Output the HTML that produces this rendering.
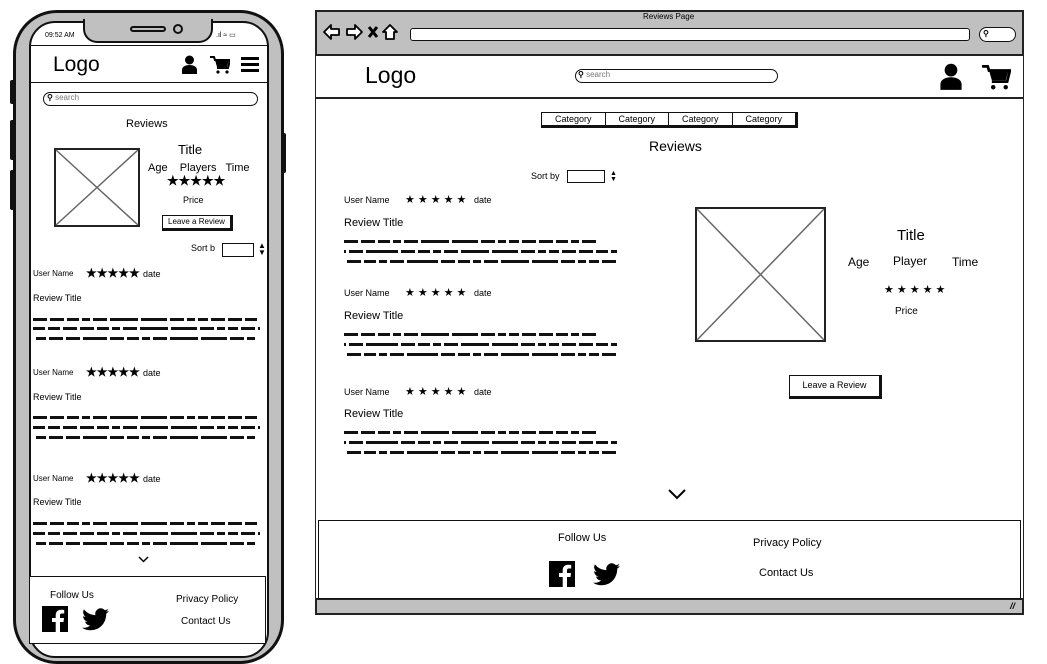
<!DOCTYPE html>
<html><head><meta charset="utf-8"><style>
*{box-sizing:border-box;margin:0;padding:0}
body{width:1047px;height:663px;background:#fff;position:relative;overflow:hidden;font-family:"Liberation Sans",sans-serif;color:#000}
.a{position:absolute;white-space:nowrap}
.scr{position:absolute;height:3px;background:repeating-linear-gradient(90deg,#111 0 14px,transparent 14px 17px,#111 17px 31px,transparent 31px 34px,#111 34px 46px,transparent 46px 49px,#111 49px 57px,transparent 57px 60px,#111 60px 74px,transparent 74px 77px,#111 77px 105px,transparent 105px 108px,#111 108px 134px,transparent 134px 137px,#111 137px 151px,transparent 151px 154px,#111 154px 162px,transparent 162px 165px,#111 165px 175px,transparent 175px 178px)}
.st{letter-spacing:1px}
</style></head><body>

<!-- PHONE -->
<div class="a" style="left:13px;top:10px;width:271px;height:654px;border:3px solid #111;border-radius:44px;background:#c0c0c0"></div>
<div class="a" style="left:29px;top:21px;width:240px;height:637px;border:2px solid #111;border-radius:26px;background:#fff"></div>
<div class="a" style="left:83px;top:19px;width:130px;height:24px;background:#c0c0c0;border:2px solid #111;border-top:none;border-radius:0 0 14px 14px"></div>
<div class="a" style="left:130px;top:26px;width:36px;height:6px;border:2px solid #111;border-radius:4px"></div>
<div class="a" style="left:173px;top:24px;width:10px;height:10px;border:2px solid #111;border-radius:50%"></div>
<div class="a" style="left:45px;top:32px;font-size:7px">09:52 AM</div>
<div class="a" style="left:216px;top:31px;font-size:7px">.ıl ≈ ▭</div>
<div class="a" style="left:10px;top:80px;width:5px;height:24px;background:#111;border-radius:2px"></div>
<div class="a" style="left:10px;top:120px;width:5px;height:40px;background:#111;border-radius:2px"></div>
<div class="a" style="left:10px;top:170px;width:5px;height:40px;background:#111;border-radius:2px"></div>
<div class="a" style="left:281px;top:133px;width:5px;height:40px;background:#111;border-radius:2px"></div>
<div class="a" style="left:30px;top:45px;width:237px;height:1px;background:#111"></div>
<div class="a" style="left:30px;top:82px;width:237px;height:1px;background:#111"></div>
<div class="a" style="left:53px;top:53px;font-size:21px">Logo</div>
<svg class="a" style="left:181px;top:55px" width="17" height="19" viewBox="0 0 17 19"><circle cx="8.5" cy="5" r="4.5"/><path d="M1 19v-4c0-3 3-5 7.5-5s7.5 2 7.5 5v4z"/></svg>
<svg class="a" style="left:210px;top:56px" width="20" height="18" viewBox="0 0 20 18"><path d="M0 1h4l1 3h15l-2 8H7" fill="none" stroke="#000" stroke-width="2"/><path d="M5 4h14l-2 7H7z"/><circle cx="8" cy="16" r="1.6"/><circle cx="17" cy="16" r="1.6"/></svg>
<div class="a" style="left:241px;top:57px;width:18px;height:3px;background:#000"></div>
<div class="a" style="left:241px;top:63px;width:18px;height:3px;background:#000"></div>
<div class="a" style="left:241px;top:69px;width:18px;height:3px;background:#000"></div>
<div class="a" style="left:43px;top:92px;width:215px;height:14px;border:1.5px solid #111;border-radius:8px"></div>
<div class="a" style="left:47px;top:93px;font-size:8px;color:#777"><b style="color:#000">⚲</b> search</div>
<div class="a" style="left:126px;top:118px;font-size:11px">Reviews</div>
<svg class="a" style="left:54px;top:148px" width="86" height="80"><rect x="1" y="1" width="84" height="77" fill="#fff" stroke="#222" stroke-width="2"/><path d="M2 2L84 77M84 2L2 77" stroke="#666" stroke-width="1.5"/></svg>
<div class="a" style="left:178px;top:142px;font-size:13px">Title</div>
<div class="a" style="left:148px;top:162px;font-size:11px">Age&nbsp;&nbsp;&nbsp; Players&nbsp;&nbsp; Time</div>
<div class="a" style="left:167px;top:173px;font-size:13px;font-weight:bold">★★★★★</div>
<div class="a" style="left:183px;top:195px;font-size:9px">Price</div>
<div class="a" style="left:162px;top:215px;width:71px;height:16px;border:1.5px solid #111;border-right-width:3px;border-bottom-width:3px;font-size:8px;text-align:center;line-height:12px">Leave a Review</div>
<div class="a" style="left:191px;top:243px;font-size:9px">Sort b</div>
<div class="a" style="left:222px;top:243px;width:32px;height:14px;border:1.5px solid #111"></div>
<div class="a" style="left:258px;top:242px;font-size:8px;line-height:7px">▲<br>▼</div>

<div class="a" style="left:33px;top:269px;font-size:8px">User Name</div><div class="a" style="left:86px;top:266px;font-size:12px;font-weight:bold">★★★★★</div><div class="a" style="left:143px;top:269px;font-size:9px">date</div>
<div class="a" style="left:33px;top:293px;font-size:9px">Review Title</div>
<div class="scr" style="left:33px;top:318px;width:227px"></div><div class="scr" style="left:33px;top:327px;width:227px;background-position:30px 0"></div><div class="scr" style="left:33px;top:337px;width:222px;background-position:60px 0"></div>

<div class="a" style="left:33px;top:368px;font-size:8px">User Name</div><div class="a" style="left:86px;top:365px;font-size:12px;font-weight:bold">★★★★★</div><div class="a" style="left:143px;top:368px;font-size:9px">date</div>
<div class="a" style="left:33px;top:392px;font-size:9px">Review Title</div>
<div class="scr" style="left:33px;top:416px;width:227px"></div><div class="scr" style="left:33px;top:426px;width:227px;background-position:30px 0"></div><div class="scr" style="left:33px;top:436px;width:222px;background-position:60px 0"></div>

<div class="a" style="left:33px;top:474px;font-size:8px">User Name</div><div class="a" style="left:86px;top:471px;font-size:12px;font-weight:bold">★★★★★</div><div class="a" style="left:143px;top:474px;font-size:9px">date</div>
<div class="a" style="left:33px;top:497px;font-size:9px">Review Title</div>
<div class="scr" style="left:33px;top:522px;width:227px"></div><div class="scr" style="left:33px;top:532px;width:227px;background-position:30px 0"></div><div class="scr" style="left:33px;top:542px;width:222px;background-position:60px 0"></div>
<svg class="a" style="left:138px;top:556px" width="11" height="7"><path d="M1 1l4.5 4.5L10 1" fill="none" stroke="#000" stroke-width="1.5"/></svg>

<div class="a" style="left:29px;top:576px;width:237px;height:68px;border:1.5px solid #111;background:#fff"></div>
<div class="a" style="left:50px;top:590px;font-size:10px">Follow Us</div>
<div class="a" style="left:176px;top:594px;font-size:10px">Privacy Policy</div>
<div class="a" style="left:181px;top:616px;font-size:10px">Contact Us</div>
<svg class="a" style="left:42px;top:606px" width="26" height="26" viewBox="0 0 26 26"><rect width="26" height="26"/><path d="M18 26V16h3.5l.5-4h-4V9.5c0-1.2.4-2 2-2h2.2V4c-.4 0-1.7-.2-3.2-.2-3.2 0-5.3 2-5.3 5.5V12H10v4h3.7v10z" fill="#fff"/></svg>
<svg class="a" style="left:82px;top:608px" width="27" height="23" viewBox="0 0 24 20"><path d="M24 2.4c-.9.4-1.8.6-2.8.8 1-.6 1.8-1.6 2.2-2.7-1 .6-2 1-3.1 1.2A4.9 4.9 0 0 0 11.9 6.2 14 14 0 0 1 1.7 1 4.9 4.9 0 0 0 3.2 7.6c-.8 0-1.6-.3-2.2-.6 0 2.4 1.7 4.4 3.9 4.8-.7.2-1.5.2-2.2.1.6 2 2.4 3.4 4.6 3.4A9.9 9.9 0 0 1 0 17.3 14 14 0 0 0 7.5 19.5c9.1 0 14-7.5 14-14v-.6c1-.7 1.8-1.6 2.5-2.5z"/></svg>

<!-- BROWSER -->
<div class="a" style="left:315px;top:10px;width:709px;height:605px;border:2px solid #222;background:#c0c0c0"></div>
<div class="a" style="left:316px;top:54px;width:707px;height:546px;background:#fff;border-top:2px solid #222;border-bottom:2px solid #222"></div>
<div class="a" style="left:643px;top:12px;font-size:8px">Reviews Page</div>
<svg class="a" style="left:323px;top:23px" width="82" height="18" viewBox="0 0 82 18">
<path d="M1 9L8 2v4h8v6H8v4z" fill="#fff" stroke="#000" stroke-width="1.8" stroke-linejoin="round"/>
<path d="M39 9L32 2v4h-8v6h8v4z" fill="#fff" stroke="#000" stroke-width="1.8" stroke-linejoin="round"/>
<path d="M46 4l8 10M54 4l-8 10" stroke="#000" stroke-width="3"/>
<path d="M60 9l7-7 7 7h-3v7h-8V9z" fill="#fff" stroke="#000" stroke-width="1.8" stroke-linejoin="round"/>
</svg>
<div class="a" style="left:410px;top:28px;width:560px;height:13px;border:1.5px solid #111;border-radius:3px;background:#fff"></div>
<div class="a" style="left:979px;top:27px;width:37px;height:15px;border:1.5px solid #111;border-radius:8px;background:#fff;font-size:8px;padding-left:3px;line-height:11px"><b>⚲</b></div>
<div class="a" style="left:316px;top:97px;width:707px;height:1.5px;background:#222"></div>
<div class="a" style="left:365px;top:62px;font-size:23px">Logo</div>
<div class="a" style="left:575px;top:69px;width:203px;height:14px;border:1.5px solid #111;border-radius:8px"></div>
<div class="a" style="left:578px;top:70px;font-size:8px;color:#777"><b style="color:#000">⚲</b> search</div>
<svg class="a" style="left:939px;top:63px" width="24" height="27" viewBox="0 0 17 19"><circle cx="8.5" cy="5" r="4.5"/><path d="M1 19v-4c0-3 3-5 7.5-5s7.5 2 7.5 5v4z"/></svg>
<svg class="a" style="left:981px;top:65px" width="30" height="25" viewBox="0 0 20 18"><path d="M0 1h4l1 3h15l-2 8H7" fill="none" stroke="#000" stroke-width="2"/><path d="M5 4h14l-2 7H7z"/><circle cx="8" cy="16" r="1.6"/><circle cx="17" cy="16" r="1.6"/></svg>

<div class="a" style="left:541px;top:112px;width:257px;height:16px;border:1.5px solid #111;border-right-width:3px;border-bottom-width:3px;display:flex;font-size:9px">
<div style="flex:1;text-align:center;border-right:1.5px solid #111;line-height:12px">Category</div><div style="flex:1;text-align:center;border-right:1.5px solid #111;line-height:12px">Category</div><div style="flex:1;text-align:center;border-right:1.5px solid #111;line-height:12px">Category</div><div style="flex:1;text-align:center;line-height:12px">Category</div></div>
<div class="a" style="left:649px;top:138px;font-size:14px">Reviews</div>
<div class="a" style="left:531px;top:171px;font-size:9px">Sort by</div>
<div class="a" style="left:567px;top:170px;width:38px;height:13px;border:1.5px solid #111"></div>
<div class="a" style="left:610px;top:171px;font-size:7px;line-height:6px">▲<br>▼</div>

<div class="a" style="left:344px;top:195px;font-size:9px">User Name</div><div class="a" style="left:405px;top:193px;font-size:11px;letter-spacing:3px">★★★★★</div><div class="a" style="left:474px;top:195px;font-size:9px">date</div>
<div class="a" style="left:344px;top:217px;font-size:11px">Review Title</div>
<div class="scr" style="left:344px;top:240px;width:253px"></div><div class="scr" style="left:344px;top:250px;width:273px;background-position:40px 0"></div><div class="scr" style="left:344px;top:260px;width:272px;background-position:80px 0"></div>

<div class="a" style="left:344px;top:288px;font-size:9px">User Name</div><div class="a" style="left:405px;top:286px;font-size:11px;letter-spacing:3px">★★★★★</div><div class="a" style="left:474px;top:288px;font-size:9px">date</div>
<div class="a" style="left:344px;top:310px;font-size:11px">Review Title</div>
<div class="scr" style="left:344px;top:333px;width:253px"></div><div class="scr" style="left:344px;top:343px;width:273px;background-position:40px 0"></div><div class="scr" style="left:344px;top:353px;width:272px;background-position:80px 0"></div>

<div class="a" style="left:344px;top:387px;font-size:9px">User Name</div><div class="a" style="left:405px;top:385px;font-size:11px;letter-spacing:3px">★★★★★</div><div class="a" style="left:474px;top:387px;font-size:9px">date</div>
<div class="a" style="left:344px;top:408px;font-size:11px">Review Title</div>
<div class="scr" style="left:344px;top:431px;width:253px"></div><div class="scr" style="left:344px;top:441px;width:273px;background-position:40px 0"></div><div class="scr" style="left:344px;top:451px;width:272px;background-position:80px 0"></div>

<svg class="a" style="left:695px;top:207px" width="131" height="135"><rect x="1" y="1" width="129" height="133" fill="#fff" stroke="#222" stroke-width="2"/><path d="M2 2L129 133M129 2L2 133" stroke="#666" stroke-width="1.5"/></svg>
<div class="a" style="left:897px;top:227px;font-size:15px">Title</div>
<div class="a" style="left:848px;top:255px;font-size:12px">Age</div>
<div class="a" style="left:893px;top:254px;font-size:12px">Player</div>
<div class="a" style="left:952px;top:255px;font-size:12px">Time</div>
<div class="a" style="left:884px;top:283px;font-size:11px;letter-spacing:3px">★★★★★</div>
<div class="a" style="left:895px;top:306px;font-size:10px">Price</div>
<div class="a" style="left:789px;top:375px;width:93px;height:24px;border:1.5px solid #111;border-right-width:3px;border-bottom-width:3px;font-size:9px;text-align:center;line-height:19px">Leave a Review</div>
<svg class="a" style="left:668px;top:489px" width="18" height="11"><path d="M1 1l8 8 8-8" fill="none" stroke="#000" stroke-width="2"/></svg>

<div class="a" style="left:318px;top:520px;width:703px;height:79px;border:1.5px solid #111;background:#fff"></div>
<div class="a" style="left:558px;top:532px;font-size:11px">Follow Us</div>
<div class="a" style="left:753px;top:537px;font-size:11px">Privacy Policy</div>
<div class="a" style="left:759px;top:567px;font-size:11px">Contact Us</div>
<svg class="a" style="left:549px;top:561px" width="26" height="26" viewBox="0 0 26 26"><rect width="26" height="26"/><path d="M18 26V16h3.5l.5-4h-4V9.5c0-1.2.4-2 2-2h2.2V4c-.4 0-1.7-.2-3.2-.2-3.2 0-5.3 2-5.3 5.5V12H10v4h3.7v10z" fill="#fff"/></svg>
<svg class="a" style="left:593px;top:563px" width="27" height="23" viewBox="0 0 24 20"><path d="M24 2.4c-.9.4-1.8.6-2.8.8 1-.6 1.8-1.6 2.2-2.7-1 .6-2 1-3.1 1.2A4.9 4.9 0 0 0 11.9 6.2 14 14 0 0 1 1.7 1 4.9 4.9 0 0 0 3.2 7.6c-.8 0-1.6-.3-2.2-.6 0 2.4 1.7 4.4 3.9 4.8-.7.2-1.5.2-2.2.1.6 2 2.4 3.4 4.6 3.4A9.9 9.9 0 0 1 0 17.3 14 14 0 0 0 7.5 19.5c9.1 0 14-7.5 14-14v-.6c1-.7 1.8-1.6 2.5-2.5z"/></svg>
<div class="a" style="left:1010px;top:601px;font-size:9px;font-style:italic;font-weight:bold">//</div>
</body></html>
